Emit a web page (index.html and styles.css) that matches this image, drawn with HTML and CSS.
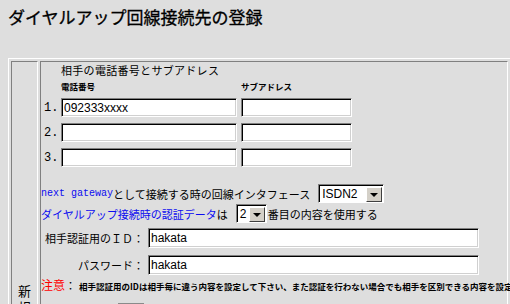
FILE: index.html
```html
<!DOCTYPE html>
<html lang="ja">
<head>
    <meta charset="UTF-8">
    <title>ダイヤルアップ回線接続先の登録</title>
    <link rel="stylesheet" href="styles.css">
</head>
<body>
    <h1 class="title">ダイヤルアップ回線接続先の登録</h1>
    <div class="frame">
        <div class="cell side">新規登録</div>
        <div class="cell main">
            <p class="caption">相手の電話番号とサブアドレス</p>
            <div class="phones">
                <span></span>
                <span class="small">電話番号</span>
                <span class="small">サブアドレス</span>

                <span class="num">1.</span>
                <input class="field tel" type="text" value="092333xxxx">
                <input class="field sub" type="text" value="">

                <span class="num">2.</span>
                <input class="field tel" type="text" value="">
                <input class="field sub" type="text" value="">

                <span class="num">3.</span>
                <input class="field tel" type="text" value="">
                <input class="field sub" type="text" value="">
            </div>

            <div class="line gateway">
                <span class="blue mono">next gateway</span><span>として接続する時の回線インタフェース</span>
                <span class="select isdn"><span class="select-text">ISDN2</span><span class="arrow"></span></span>
            </div>
            <div class="line auth">
                <span class="blue">ダイヤルアップ接続時の認証データ</span><span>は</span>
                <span class="select num-select"><span class="select-text">2</span><span class="arrow"></span></span>
                <span>番目の内容を使用する</span>
            </div>

            <div class="login">
                <span class="label">相手認証用のＩＤ：</span>
                <input class="field wide" type="text" value="hakata">
                <span class="label">パスワード：</span>
                <input class="field wide" type="text" value="hakata">
            </div>

            <p class="note"><span class="red">注意</span>：<span class="small note-text">相手認証用のIDは相手毎に違う内容を設定して下さい、また認証を行わない場合でも相手を区別できる内容を設定してください。</span></p>

            <div class="actions">
                <span class="btn"></span>
            </div>
        </div>
    </div>
</body>
</html>
```

FILE: styles.css
```css
body {
    margin: 0;
    padding: 0 8px;
    background-color: #dedede;
    font-family: "Noto Sans CJK JP", sans-serif;
    font-size: 11px;
    color: #000;
    overflow: hidden;
}
.title {
    font-size: 17px;
    font-weight: normal;
    line-height: 20px;
    margin: 7px 0 0;
    -webkit-text-stroke: 0.3px #000;
}
.frame {
    margin-top: 31px;
    width: 497px;
    height: 300px;
    display: flex;
    gap: 2px;
    padding: 2px;
    border: 1px solid;
    border-color: #fff #808080 #808080 #fff;
}
.cell {
    border: 1px solid;
    border-color: #808080 #fff #fff #808080;
}
.side {
    width: 25px;
    flex-shrink: 0;
    box-sizing: content-box;
    padding-top: 221px;
    font-size: 13px;
    line-height: 16px;
    text-align: center;
}
.main {
    flex: 1;
    min-width: 0;
}
.caption {
    margin: 1px 0 0 20px;
    line-height: 15px;
    letter-spacing: 0.3px;
}
.small {
    font-size: 8.5px;
    font-weight: bold;
    letter-spacing: 0;
    line-height: 11px;
}
.note-text {
    margin-left: 3px;
}
.phones {
    display: grid;
    grid-template-columns: 16px 176px 111px;
    column-gap: 4px;
    row-gap: 6px;
    align-items: center;
    margin-top: 3px;
}
.num {
    font-family: "Liberation Mono", monospace;
    font-size: 12px;
    padding-left: 3px;
}
.field {
    box-sizing: border-box;
    height: 19px;
    margin: 0;
    padding: 0 2px;
    font-family: "Liberation Sans", sans-serif;
    font-size: 12px;
    background: #fff;
    border: 1px solid;
    border-color: #808080 #fff #fff #808080;
    box-shadow: inset 1px 1px 0 #000, inset -1px -1px 0 #d0d0d0;
    outline: none;
}
.tel {
    width: 176px;
}
.sub {
    width: 111px;
}
.line {
    display: flex;
    align-items: center;
    height: 19px;
    white-space: nowrap;
}
.gateway {
    margin-top: 17px;
}
.auth {
    margin-top: 1px;
}
.blue {
    color: #0c0cf0;
}
.mono {
    font-family: "Liberation Mono", monospace;
    font-size: 10px;
}
.red {
    color: #f00;
}
.select {
    box-sizing: border-box;
    height: 19px;
    display: inline-flex;
    align-items: center;
    justify-content: space-between;
    background: #fff;
    border: 1px solid;
    border-color: #808080 #fff #fff #808080;
    box-shadow: inset 1px 1px 0 #000;
    padding: 0 1px 0 3px;
    font-family: "Liberation Sans", sans-serif;
    font-size: 12px;
}
.isdn {
    width: 66px;
    margin-left: 8px;
}
.num-select {
    width: 31px;
    margin: 0 1px 0 8px;
}
.arrow {
    box-sizing: border-box;
    width: 16px;
    height: 15px;
    margin-top: 1px;
    background: #d4d0c8;
    border: 1px solid;
    border-color: #fff #404040 #404040 #fff;
    position: relative;
}
.arrow::after {
    content: "";
    position: absolute;
    left: 3px;
    top: 5px;
    border-left: 4px solid transparent;
    border-right: 4px solid transparent;
    border-top: 4px solid #000;
}
.login {
    display: grid;
    grid-template-columns: 103px 331px;
    column-gap: 4px;
    row-gap: 7px;
    align-items: center;
    margin-top: 5px;
}
.label {
    text-align: right;
}
.wide {
    width: 331px;
    height: 20px;
}
.note {
    margin: 2px 0 0;
    white-space: nowrap;
    line-height: 16px;
}
.note .red {
    font-size: 12px;
}
.actions {
    margin: 10px 0 0 77px;
}
.btn {
    display: block;
    width: 26px;
    height: 20px;
    background: #dedede;
    border-top: 2px solid #8a8a8a;
}
```
